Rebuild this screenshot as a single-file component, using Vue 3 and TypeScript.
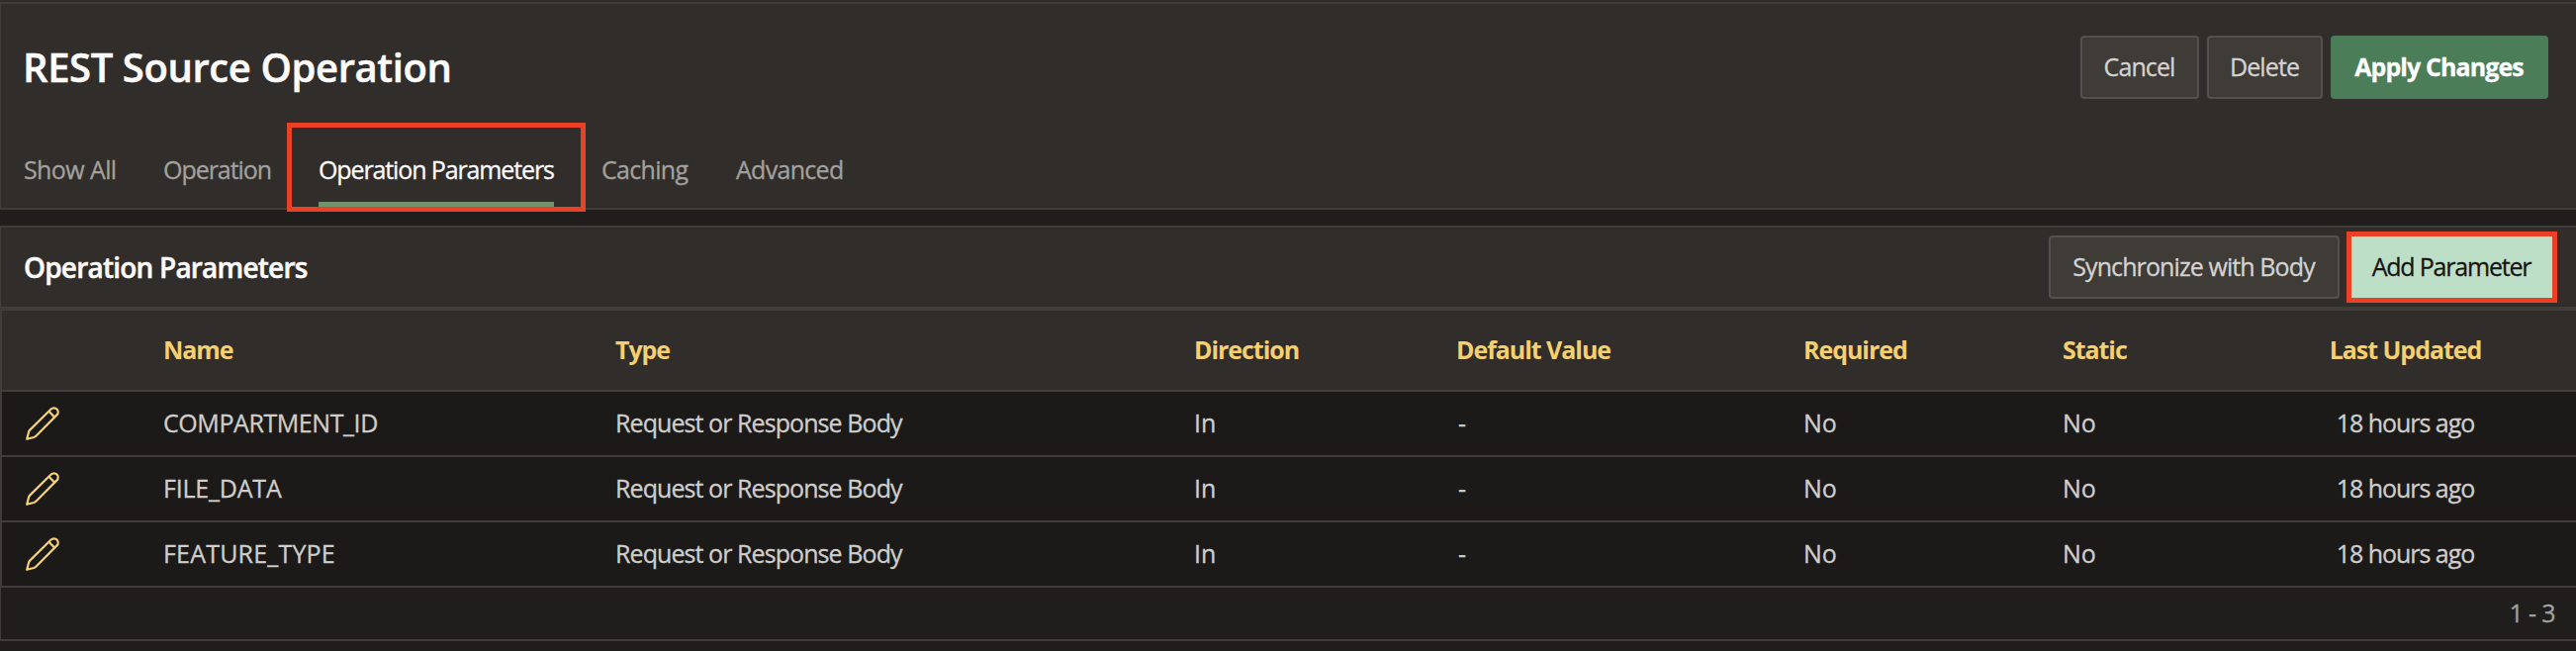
<script setup lang="ts">
interface Tab { label: string; tracking: number; active?: boolean }
interface Parameter { name: string; tracking: number }

const tabs: Tab[] = [
  { label: 'Show All', tracking: -0.6 },
  { label: 'Operation', tracking: -1.05 },
  { label: 'Operation Parameters', tracking: -1.12, active: true },
  { label: 'Caching', tracking: -0.7 },
  { label: 'Advanced', tracking: -0.7 },
]

const columns = ['', 'Name', 'Type', 'Direction', 'Default Value', 'Required', 'Static', 'Last Updated']

const parameters: Parameter[] = [
  { name: 'COMPARTMENT_ID', tracking: -0.42 },
  { name: 'FILE_DATA', tracking: -0.2 },
  { name: 'FEATURE_TYPE', tracking: 0.2 },
]
</script>

<template>
  <div class="page">
    <header class="hero">
      <div class="hero-top">
        <h1>REST Source Operation</h1>
        <div class="actions">
          <button class="btn cancel">Cancel</button>
          <button class="btn delete">Delete</button>
          <button class="btn apply">Apply Changes</button>
        </div>
      </div>
      <nav class="tabs">
        <a v-for="tab in tabs" :key="tab.label" class="tab" :class="{ active: tab.active }">
          <span class="tab-label" :style="{ letterSpacing: tab.tracking + 'px' }">{{ tab.label }}</span>
        </a>
      </nav>
      <div class="callout callout-tab"></div>
    </header>

    <section class="region">
      <div class="region-head">
        <h2>Operation Parameters</h2>
        <div class="region-actions">
          <button class="btn sync">Synchronize with Body</button>
          <button class="btn add">Add Parameter</button>
        </div>
      </div>

      <div class="report">
        <div class="row head">
          <div v-for="col in columns" :key="col" class="cell">{{ col }}</div>
        </div>
        <div v-for="p in parameters" :key="p.name" class="row">
          <div class="cell">
            <svg class="pencil" viewBox="0 0 34 34" fill="none">
              <path d="M1.2 32.8 L3 25.8 Q3.4 24.4 4.4 23.4 L25.6 2.5 A4.05 4.05 0 0 1 31.5 8.4 L10.6 29.6 Q9.6 30.6 8.2 31 Z M23.4 4.8 L29.2 10.6" />
            </svg>
          </div>
          <div class="cell" :style="{ letterSpacing: p.tracking + 'px' }">{{ p.name }}</div>
          <div class="cell">Request or Response Body</div>
          <div class="cell short">In</div>
          <div class="cell dash">-</div>
          <div class="cell short">No</div>
          <div class="cell short">No</div>
          <div class="cell">18 hours ago</div>
        </div>
      </div>
      <div class="pagination">1 - 3</div>
    </section>
  </div>
</template>

<style>
body { margin: 0; background: #201e1c; }
</style>

<style scoped>
* { box-sizing: border-box; }
.page {
  width: 2604px; height: 658px; overflow: hidden;
  background: #201e1c; color: #d0cecb;
  font: 400 25px/34px "Open Sans", "Noto Sans", sans-serif;
  -webkit-text-stroke: 0.3px currentColor;
  padding-top: 2px;
  box-shadow: inset 0 2px #312d2a;
}
h1, h2 { margin: 0; color: #fcfbfa; font-weight: 600; -webkit-text-stroke: 0.5px #fcfbfa; }
.hero {
  position: relative; height: 210px; background: #312d2a;
  border-top: 2px solid #403c38; border-bottom: 2px solid #403c38; border-left: 1px solid #403c38;
}
.hero-top {
  height: 128px; padding: 0 28px 0 23px;
  display: flex; align-items: center; justify-content: space-between;
}
h1 { font-size: 40px; line-height: 54px; letter-spacing: -0.4px; margin-left: -1px; }
.actions, .region-actions { display: flex; align-items: center; gap: 8px; }
.btn {
  height: 64px; padding: 0 1px 2px 0; border: 2px solid #54504b; border-radius: 4px;
  background: #3f3b37; color: #d5d3d0; font: inherit; letter-spacing: -0.9px; white-space: nowrap;
}
.cancel { width: 120px; }
.delete { width: 117px; }
.apply { width: 220px; background: #4a7d58; border-color: #4a7d58; color: #fff; font-weight: 700; }
.sync { width: 294px; }
.add {
  width: 213px; height: 72px; border: 5px solid #ea4025; border-radius: 0;
  background: #bddfc8; color: #161513; letter-spacing: -1.2px;
}
.tabs { display: grid; grid-template-columns: 141px 157px 286px 136px auto; height: 78px; padding-left: 23px; }
.tab { display: flex; color: #a3a19d; white-space: nowrap; }
.tab-label { height: 72px; line-height: 78px; }
.tab.active { color: #fcfbfa; width: 238px; border-bottom: 6px solid #71926a; }
.callout { position: absolute; border: 5px solid #ea4025; }
.callout-tab { left: 289px; top: 120px; width: 302px; height: 90px; }

.region { margin-top: 16px; }
.region-head {
  height: 86px; background: #312d2a; padding: 0 19px 0 23px;
  border-top: 2px solid #403c38; border-bottom: 4px solid #403c38; border-left: 1px solid #403c38;
  display: flex; align-items: center; justify-content: space-between;
}
h2 { font-size: 28px; line-height: 38px; letter-spacing: -0.8px; }
.region-actions { gap: 7px; }
.report { border-left: 2px solid #403c38; }
.row {
  display: grid; grid-template-columns: 163px 457px 585px 265px 351px 262px 237px 219px;
  height: 66px; background: #1b1a18; border-bottom: 2px solid #403c38; align-items: center;
}
.head { height: 82px; background: #312d2a; color: #f6d070; font-weight: 700; -webkit-text-stroke: 0; }
.cell { white-space: nowrap; padding-bottom: 2px; letter-spacing: -0.92px; }
.head .cell { letter-spacing: -1.05px; padding-bottom: 2px; }
.cell:last-child { text-align: center; letter-spacing: -1.03px; }
.cell.short { letter-spacing: 0; }
.cell.dash { padding-left: 2px; }
.pencil { display: block; width: 34px; height: 34px; margin: 1px 0 0 24px; stroke: #f6d070; stroke-width: 2.2; stroke-linejoin: round; }
.pagination {
  height: 54px; border-bottom: 2px solid #403c38; border-left: 1px solid #403c38;
  padding-right: 21px; line-height: 51px; text-align: right; color: #a3a19d; letter-spacing: -0.6px;
}
</style>
